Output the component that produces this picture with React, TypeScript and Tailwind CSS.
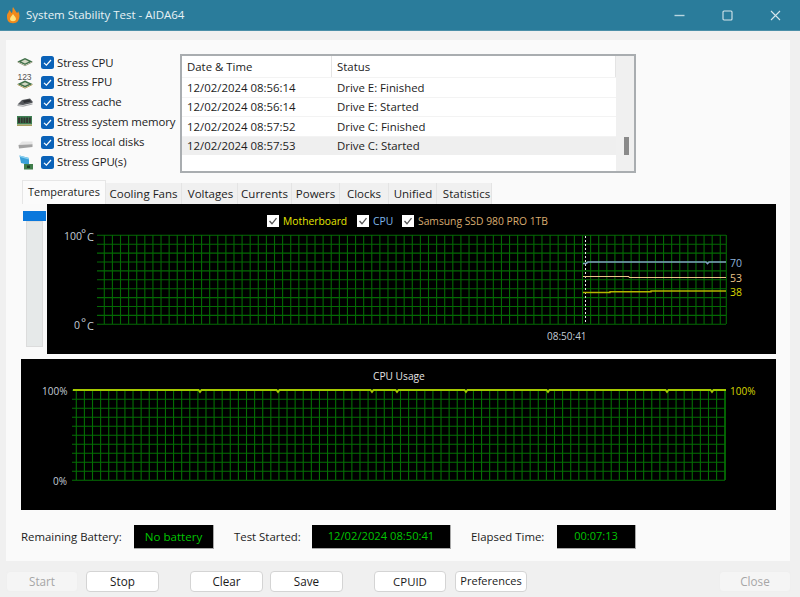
import React from "react";

const range = (n: number) => Array.from({ length: n }, (_, i) => i);

function Check() {
  return (
    <svg width="13" height="13" viewBox="0 0 13 13" className="shrink-0">
      <rect x="0" y="0" width="13" height="13" rx="2.5" fill="#0a62b8" />
      <path d="M3 6.8 L5.4 9.2 L10 4" fill="none" stroke="#fff" strokeWidth="1.2" />
    </svg>
  );
}

function WhiteCheck() {
  return (
    <svg width="12" height="12" viewBox="0 0 12 12" className="shrink-0">
      <rect width="12" height="12" fill="#fff" />
      <path d="M2.5 6 L5 8.8 L9.5 3.2" fill="none" stroke="#555" strokeWidth="1.3" />
    </svg>
  );
}

const CpuIcon = () => (
  <svg width="16" height="10" viewBox="0 0 16 10" className="block">
    <path d="M0.5 4.5 L8 1 L15.5 4.5 L8 8 Z" fill="#3f6f48" />
    <path d="M4 4.5 L8 2.6 L12 4.5 L8 6.4 Z" fill="#d3d8c4" />
    <path d="M0.5 5 L8 8.8 L15.5 5" fill="none" stroke="#a8a890" />
  </svg>
);
const FpuIcon = () => (
  <svg width="16" height="17" viewBox="0 0 16 17" className="block">
    <text x="0.5" y="7.5" fontSize="8.5" fill="#555" fontFamily="'Liberation Sans', sans-serif">123</text>
    <path d="M0.5 12 L8 8.6 L15.5 12 L8 15.4 Z" fill="#3f6f48" />
    <path d="M4 12 L8 10.2 L12 12 L8 13.8 Z" fill="#d3d8c4" />
    <path d="M0.5 12.5 L8 16.2 L15.5 12.5" fill="none" stroke="#b0a060" />
  </svg>
);
const CacheIcon = () => (
  <svg width="16" height="9" viewBox="0 0 16 9" className="block">
    <path d="M0.5 6.5 L5 2 L13 0.5 L15.5 3.5 L15.5 5 L6 7 Z" fill="#55585c" />
    <path d="M6 2.5 L12.5 1.5 L14 3.5 L7 5 Z" fill="#2e3034" />
    <path d="M0.5 7 L6 7.5 L15.5 5.5 L15.5 6.5 L6 8.7 L0.5 8 Z" fill="#a4a6a8" />
  </svg>
);
const MemIcon = () => (
  <svg width="15" height="10" viewBox="0 0 15 10" className="block">
    <rect width="15" height="8.5" fill="#3f8054" />
    {range(5).map((i) => (
      <rect key={i} x={1 + i * 2.7} y="1.5" width="2" height="5.5" fill="#33352f" />
    ))}
    <rect y="8.5" width="15" height="1.5" fill="#a8a060" />
  </svg>
);
const DiskIcon = () => (
  <svg width="15" height="8" viewBox="0 0 15 8" className="block">
    <path d="M0.5 4 L4 0.5 L14.5 0.5 L14.5 3.5 Z" fill="#e4e4e4" />
    <path d="M0.5 4 L14.5 3.2 L14.5 6 L1 7.5 Z" fill="#a2a2a2" />
  </svg>
);
const GpuIcon = () => (
  <svg width="14" height="15" viewBox="0 0 14 15" className="block">
    <path d="M0.5 0.5 L10 3 L10 10 L2 8 Z" fill="#3aa0d8" />
    <path d="M0.5 0.5 L10 3 L10 4.5 L1 2 Z" fill="#8ad0f0" />
    <rect x="5" y="9" width="9" height="5.5" fill="#3f7d4a" />
    <rect x="8" y="10.5" width="3" height="2.5" fill="#20402a" />
  </svg>
);

const stress = [
  { label: "Stress CPU", icon: <CpuIcon />, h: "h-[19px]", pad: "pb-[2px]" },
  { label: "Stress FPU", icon: <FpuIcon />, h: "h-[20px]", pad: "pb-[4px]" },
  { label: "Stress cache", icon: <CacheIcon />, h: "h-[20px]", pad: "pb-[0px]" },
  { label: "Stress system memory", icon: <MemIcon />, h: "h-[20px]", pad: "pb-[2px]" },
  { label: "Stress local disks", icon: <DiskIcon />, h: "h-[20px]", pad: "pl-[1px] pt-[6px]" },
  { label: "Stress GPU(s)", icon: <GpuIcon />, h: "h-[20px]", pad: "pl-[2px] pt-[1px]" },
];

const log = [
  ["12/02/2024 08:56:14", "Drive E: Finished"],
  ["12/02/2024 08:56:14", "Drive E: Started"],
  ["12/02/2024 08:57:52", "Drive C: Finished"],
  ["12/02/2024 08:57:53", "Drive C: Started"],
];

const tabs = [
  ["Cooling Fans", "w-[76px]"],
  ["Voltages", "w-[56px] pl-[2px]"],
  ["Currents", "w-[54px]"],
  ["Powers", "w-[48px]"],
  ["Clocks", "w-[49px]"],
  ["Unified", "w-[48px] pl-[1px]"],
  ["Statistics", "w-[55px] pl-[5px]"],
];

const FF = "'Open Sans', sans-serif";

function Grid({ x0, x1, y0, y1, vStart, vStep, color }: { x0: number; x1: number; y0: number; y1: number; vStart: number; vStep: number; color: string }) {
  const step = (y1 - y0) / 10;
  const count = Math.floor((x1 - vStart) / vStep) + 1;
  return (
    <g stroke={color} strokeWidth="1.1">
      {range(11).map((i) => (
        <line key={i} x1={x0} x2={x1} y1={y0 + i * step + 0.3} y2={y0 + i * step + 0.3} />
      ))}
      {range(count).map((i) => (
        <line key={i} x1={vStart + i * vStep + 0.3} x2={vStart + i * vStep + 0.3} y1={y0} y2={y1} />
      ))}
      <line x1={x1 + 0.3} x2={x1 + 0.3} y1={y0} y2={y1} />
    </g>
  );
}

function TempChart() {
  const ox = 47;
  const oy = 204;
  const X = (x: number) => x - ox;
  const Y = (y: number) => y - oy;
  return (
    <svg width="729" height="150" viewBox="0 0 729 150" className="block bg-black" fontFamily={FF} fontSize="10.5">
      <Grid x0={X(97)} x1={X(726)} y0={Y(235)} y1={Y(324)} vStart={X(104)} vStep={8.105} color="#046a04" />
      <line x1={X(585.5)} x2={X(585.5)} y1={Y(236)} y2={Y(324)} stroke="#e8e8e8" strokeWidth="1" strokeDasharray="2 2" />
      <path d={`M${X(583)} ${Y(263.5)} L${X(586)} ${Y(263.5)} L${X(588)} ${Y(262)} L${X(706)} ${Y(262)} L${X(707.5)} ${Y(263.5)} L${X(709)} ${Y(262)} L${X(726)} ${Y(262)}`} fill="none" stroke="#7f9fc0" strokeWidth="1.6" />
      <path d={`M${X(583)} ${Y(276.5)} L${X(629)} ${Y(276.5)} L${X(629)} ${Y(277.5)} L${X(726)} ${Y(277.5)}`} fill="none" stroke="#ecc488" strokeWidth="1" />
      <path d={`M${X(583)} ${Y(292.5)} L${X(610)} ${Y(292.5)} L${X(610)} ${Y(291.7)} L${X(651)} ${Y(291.7)} L${X(651)} ${Y(291)} L${X(726)} ${Y(291)}`} fill="none" stroke="#b4b400" strokeWidth="1.4" />
      <g fill="#c3ccd6">
        <text x={X(64)} y={Y(240)}>100</text>
        <text x={X(81)} y={Y(238)} fontSize="12">°</text>
        <text x={X(87)} y={Y(241)} fontSize="11">C</text>
        <text x={X(74)} y={Y(329)}>0</text>
        <text x={X(81)} y={Y(327)} fontSize="12">°</text>
        <text x={X(87)} y={Y(330)} fontSize="11">C</text>
        <text x={X(547)} y={Y(340)} fontSize="10">08:50:41</text>
      </g>
      <text x={X(730)} y={Y(267)} fill="#8fb4dc">70</text>
      <text x={X(730)} y={Y(282)} fill="#ecc488">53</text>
      <text x={X(730)} y={Y(296)} fill="#d8d800">38</text>
      <foreignObject x={X(267)} y={Y(214)} width="290" height="14">
        <div className="flex items-center h-[14px] text-[10.3px] leading-none [font-family:'Open_Sans',sans-serif]">
          <WhiteCheck />
          <span className="ml-[4px] w-[74px] text-[#e6e600]">Motherboard</span>
          <WhiteCheck />
          <span className="ml-[4px] w-[29px] text-[#7fb6ea]">CPU</span>
          <WhiteCheck />
          <span className="ml-[4px] text-[#d8ac70]">Samsung SSD 980 PRO 1TB</span>
        </div>
      </foreignObject>
    </svg>
  );
}

function CpuChart() {
  const ox = 21;
  const oy = 359;
  const X = (x: number) => x - ox;
  const Y = (y: number) => y - oy;
  const dips = [200, 278, 372, 397, 466, 548, 667, 712];
  let d = `M${X(73)} ${Y(390)}`;
  dips.forEach((x) => {
    d += ` L${X(x - 1.5)} ${Y(390)} L${X(x)} ${Y(392)} L${X(x + 1.5)} ${Y(390)}`;
  });
  d += ` L${X(726)} ${Y(390)}`;
  return (
    <svg width="755" height="151" viewBox="0 0 755 151" className="block bg-black" fontFamily={FF} fontSize="10">
      <Grid x0={X(72)} x1={X(725)} y0={Y(390)} y1={Y(480)} vStart={X(76)} vStep={8.105} color="#046f04" />
      <path d={d} fill="none" stroke="#a4c800" strokeWidth="1.8" />
      <g fill="#c3ccd6">
        <text x={X(42)} y={Y(395)}>100%</text>
        <text x={X(53)} y={Y(485)}>0%</text>
      </g>
      <text x={X(730)} y={Y(395)} fill="#d8d800">100%</text>
      <text x={X(373)} y={Y(380)} fill="#e4e4e4" fontSize="10.2">CPU Usage</text>
    </svg>
  );
}

function Btn({ label, w, disabled, size = "text-[11.7px]" }: { label: string; w: string; disabled?: boolean; size?: string }) {
  return (
    <div
      className={`${w} ${size} h-[21px] flex items-center justify-center rounded-[4px] border ${
        disabled ? "bg-[#f5f5f5] border-[#efefef] text-[#a6a6a6]" : "bg-white border-[#d4d4d4] text-[#1a1a1a]"
      }`}
    >
      {label}
    </div>
  );
}

function Readout({ text, w, size }: { text: string; w: string; size: string }) {
  return (
    <div className={`${w} ${size} h-[24px] bg-black flex items-center justify-center text-[#00c400] border-b border-r border-[#a8a8a8]`}>
      {text}
    </div>
  );
}

export default function App() {
  return (
    <div className="w-[800px] h-[597px] bg-[#f0f0f0] flex flex-col overflow-hidden text-[#1c1c1c] [font-family:'Open_Sans',sans-serif]">
      <div className="h-[31px] shrink-0 bg-[#2a7c9b] border-b border-[#4b8fa8] flex items-center pl-[6px]">
        <svg width="14" height="17" viewBox="0 0 14 17">
          <path d="M1 9 C1 6 3 6 3 3 C5 4 5 6 6 6 C7 4 6 2 7 0 C9 3 10 5 11 6 C12 5 12 5 12 4 C14 7 14 11 12 14 C10 17 4 17 2 14 C1 12 1 11 1 9 Z" fill="#f08a1c" />
          <path d="M4 12 C4 10 6 9 7 7 C8 9 10 10 10 12 C10 15 4 15 4 12 Z" fill="#ffe27a" />
        </svg>
        <span className="ml-[6px] text-[11.5px] text-[#e8f2f5] leading-none">System Stability Test - AIDA64</span>
        <div className="ml-auto flex items-center mr-[19px] gap-[37px]">
          <svg width="11" height="11" viewBox="0 0 11 11"><path d="M0.5 5.5 H10.5" stroke="#b9d6e0" strokeWidth="1.4" /></svg>
          <svg width="11" height="11" viewBox="0 0 11 11"><rect x="1" y="1" width="9" height="9" rx="1" fill="none" stroke="#d5e6ec" strokeWidth="1.1" /></svg>
          <svg width="11" height="11" viewBox="0 0 11 11"><path d="M1 1 L10 10 M10 1 L1 10" stroke="#d5e6ec" strokeWidth="1.1" /></svg>
        </div>
      </div>

      <div className="mx-[6px] mt-[9px] h-[521px] shrink-0 w-[784px] bg-[#fafafa] flex flex-col">
        <div className="flex h-[119px] mt-[14px] shrink-0">
          <div className="w-[174px] pl-[11px] -mt-[1px] flex flex-col text-[11.4px] tracking-[-0.1px]">
            {stress.map((s) => (
              <div key={s.label} className={`${s.h} shrink-0 flex items-center`}>
                <div className={`w-[24px] shrink-0 ${s.pad}`}>{s.icon}</div>
                <Check />
                <span className="ml-[3px] whitespace-nowrap">{s.label}</span>
              </div>
            ))}
          </div>
          <div className="w-[456px] h-[119px] border-2 border-[#a9adb0] bg-white flex text-[11.4px]">
            <div className="flex-1 flex flex-col">
              <div className="h-[21px] flex items-center">
                <div className="w-[150px] pl-[5px] h-full flex items-center border-r border-[#e4e4e4]">Date &amp; Time</div>
                <div className="flex-1 pl-[5px] h-full flex items-center border-r border-[#e4e4e4]">Status</div>
              </div>
              {log.map((r, i) => (
                <div key={i} className={`h-[19.5px] flex items-center border-t border-[#f3f3f3] ${i === 3 ? "bg-[#efefef]" : ""}`}>
                  <div className="w-[150px] pl-[5px] whitespace-nowrap">{r[0]}</div>
                  <div className="pl-[5px] whitespace-nowrap">{r[1]}</div>
                </div>
              ))}
            </div>
            <div className="w-[18px] bg-[#f0f0f0] flex flex-col items-center pt-[81px] pl-[2px]">
              <div className="w-[5px] h-[18px] bg-[#8a8a8a]" />
            </div>
          </div>
        </div>

        <div className="flex ml-[16px] mt-[7px] h-[24px] items-end shrink-0 text-[11.5px]">
          <div className="w-[84px] h-[24px] flex items-center justify-center text-[10.9px] bg-[#fbfbfb] border border-b-0 border-[#e6e6e6]">Temperatures</div>
          {tabs.map(([t, w]) => (
            <div key={t} className={`${w} h-[21px] flex items-center justify-center bg-[#f0f0f0] border-r border-[#e4e4e4] whitespace-nowrap`}>{t}</div>
          ))}
        </div>

        <div className="flex ml-[16px] h-[150px] shrink-0">
          <div className="w-[25px] flex flex-col pt-[7px]">
            <div className="h-[10px] w-[23px] ml-[1px] bg-[#0a78dc]" />
            <div className="h-[126px] w-[17px] ml-[4px] bg-[#e6e9e9] border border-[#dcdcdc]" />
          </div>
          <TempChart />
        </div>

        <div className="ml-[15px] mt-[5px] shrink-0">
          <CpuChart />
        </div>

        <div className="flex items-center ml-[15px] mt-[15px] h-[24px] text-[11.4px] shrink-0">
          <span className="w-[113px] whitespace-nowrap">Remaining Battery:</span>
          <Readout text="No battery" w="w-[80px]" size="text-[11.6px]" />
          <span className="ml-[20px] w-[78px] whitespace-nowrap">Test Started:</span>
          <Readout text="12/02/2024 08:50:41" w="w-[139px]" size="text-[11.2px]" />
          <span className="ml-[20px] w-[86px] whitespace-nowrap">Elapsed Time:</span>
          <Readout text="00:07:13" w="w-[79px]" size="text-[11px]" />
        </div>
      </div>

      <div className="flex mt-[10px] px-[6px] shrink-0">
        <Btn label="Start" w="w-[72px]" disabled />
        <div className="ml-[8px]"><Btn label="Stop" w="w-[73px]" /></div>
        <div className="ml-[31px]"><Btn label="Clear" w="w-[73px]" /></div>
        <div className="ml-[7px]"><Btn label="Save" w="w-[73px]" /></div>
        <div className="ml-[31px]"><Btn label="CPUID" w="w-[72px]" size="text-[11.4px]" /></div>
        <div className="ml-[9px]"><Btn label="Preferences" w="w-[72px]" size="text-[11px]" /></div>
        <div className="ml-auto mr-[3px]"><Btn label="Close" w="w-[72px]" disabled /></div>
      </div>
    </div>
  );
}
